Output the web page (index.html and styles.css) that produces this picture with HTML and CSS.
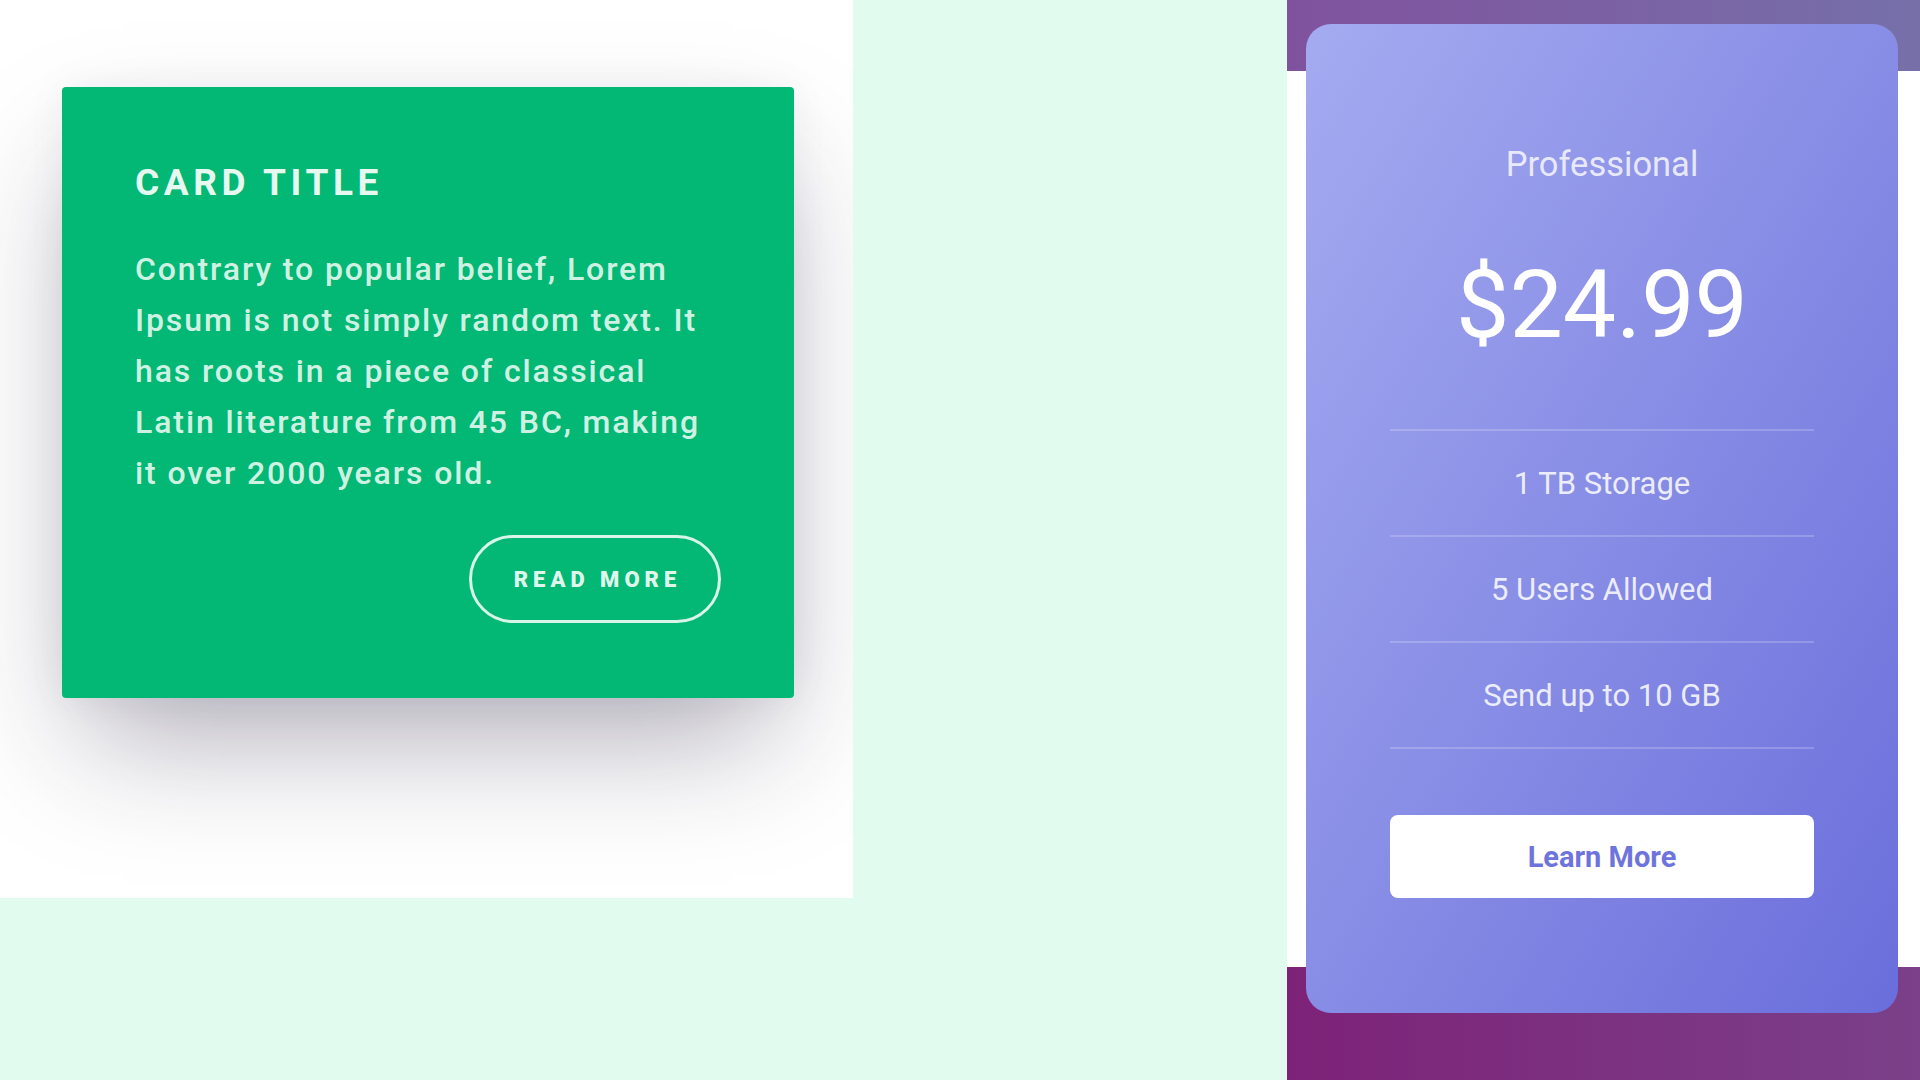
FILE: index.html
```html
<!DOCTYPE html>
<html lang="en">
<head>
<meta charset="utf-8">
<title>Cards</title>
<link rel="stylesheet" href="styles.css">
</head>
<body>
  <section class="card-stage">
    <article class="info-card">
      <h2 class="info-title">CARD TITLE</h2>
      <p class="info-text">Contrary to popular belief, Lorem Ipsum is not simply random text. It has roots in a piece of classical Latin literature from 45 BC, making it over 2000 years old.</p>
      <a class="info-btn" href="#">READ MORE</a>
    </article>
  </section>

  <section class="pricing-stage">
    <div class="bands">
      <div class="band band-top"></div>
      <div class="band-body"></div>
      <div class="band band-bottom"></div>
    </div>
    <article class="price-card">
      <h3 class="plan-name">Professional</h3>
      <div class="plan-price">$24.99</div>
      <ul class="plan-features">
        <li>1 TB Storage</li>
        <li>5 Users Allowed</li>
        <li>Send up to 10 GB</li>
      </ul>
      <a class="plan-btn" href="#">Learn More</a>
    </article>
  </section>
</body>
</html>
```

FILE: styles.css
```css
* { box-sizing: border-box; }

html, body {
  margin: 0;
  padding: 0;
}

body {
  width: 1920px;
  height: 1080px;
  overflow: hidden;
  background: #e1fcef;
  display: flex;
  justify-content: space-between;
  align-items: flex-start;
  font-family: Roboto, "Liberation Sans", Arial, sans-serif;
}

/* ---------- left: green card ---------- */
.card-stage {
  width: 853px;
  height: 898px;
  background: #ffffff;
  overflow: hidden;
  padding: 87px 0 0 62px;
}

.info-card {
  width: 732px;
  height: 611px;
  background: #02b874;
  border-radius: 4px;
  padding: 73px 73px 0;
  display: flex;
  flex-direction: column;
  box-shadow: 0 60px 120px -20px rgba(40, 30, 60, 0.36),
              0 0 40px rgba(40, 30, 60, 0.05);
}

.info-title {
  margin: 0;
  font-size: 37px;
  line-height: 46px;
  font-weight: 700;
  letter-spacing: 4.6px;
  color: rgba(255, 255, 255, 0.92);
}

.info-text {
  margin: 38px 0 0;
  font-size: 32px;
  line-height: 51px;
  letter-spacing: 1.9px;
  font-weight: 500;
  color: rgba(255, 255, 255, 0.84);
}

.info-btn {
  margin-top: 36px;
  align-self: flex-end;
  width: 252px;
  height: 88px;
  border: 3px solid rgba(255, 255, 255, 0.85);
  border-radius: 44px;
  display: flex;
  align-items: center;
  justify-content: center;
  padding-left: 5px;
  color: rgba(255, 255, 255, 0.9);
  text-decoration: none;
  font-size: 22px;
  font-weight: 900;
  letter-spacing: 5px;
}

/* ---------- right: pricing ---------- */
.pricing-stage {
  width: 633px;
  height: 1080px;
  display: grid;
  grid-template-columns: 1fr;
  grid-template-rows: 1fr;
}

.bands,
.price-card {
  grid-column: 1;
  grid-row: 1;
}

.bands {
  display: flex;
  flex-direction: column;
}

.band-top {
  height: 71px;
  background: linear-gradient(to right, #80529e, #7670a9);
}

.band-body {
  flex: 1;
  background: #ffffff;
}

.band-bottom {
  height: 113px;
  background: linear-gradient(to right, #7d2278, #7b4089);
}

.price-card {
  margin: 24px 22px 67px 19px;
  border-radius: 25px;
  background: linear-gradient(to bottom right, #a5abf0, #6a6edb);
  padding: 120px 84px 115px;
  display: flex;
  flex-direction: column;
  align-items: stretch;
  text-align: center;
  color: #ffffff;
}

.plan-name {
  margin: 0;
  font-size: 34.5px;
  line-height: 40px;
  font-weight: 400;
  color: rgba(255, 255, 255, 0.8);
}

.plan-price {
  margin-top: 74px;
  font-size: 95px;
  line-height: 94px;
  font-weight: 400;
  color: #ffffff;
}

.plan-features {
  list-style: none;
  margin: 77px 0 0;
  padding: 0;
  border-top: 2px solid rgba(255, 255, 255, 0.2);
}

.plan-features li {
  height: 106px;
  border-bottom: 2px solid rgba(255, 255, 255, 0.2);
  display: flex;
  align-items: center;
  justify-content: center;
  font-size: 31px;
  color: rgba(255, 255, 255, 0.85);
}

.plan-btn {
  margin-top: 66px;
  height: 83px;
  border-radius: 8px;
  background: #ffffff;
  display: flex;
  align-items: center;
  justify-content: center;
  color: #6f74dd;
  text-decoration: none;
  font-size: 29px;
  font-weight: 700;
}
```
